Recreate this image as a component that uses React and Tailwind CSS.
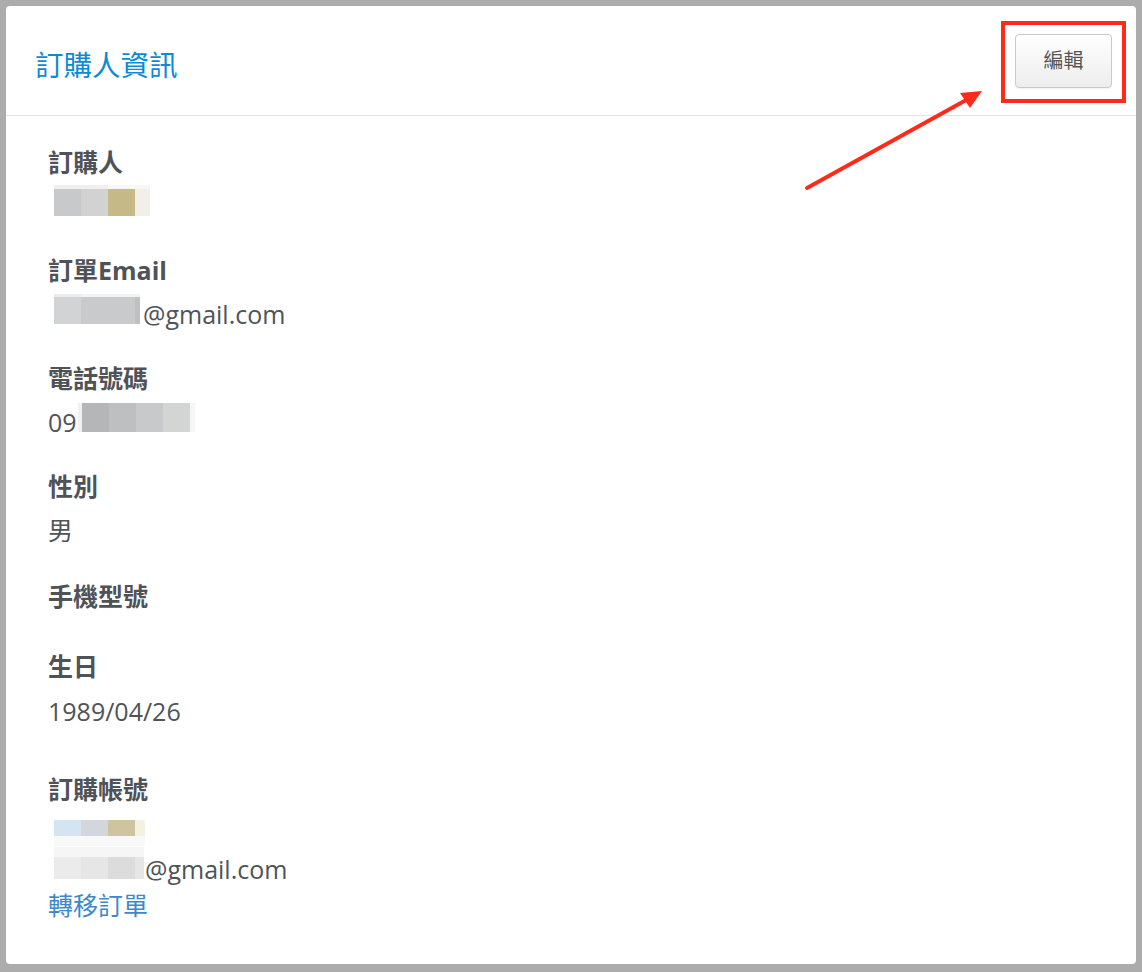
import React from "react";

// 模糊處理過的個資區塊：上方一條淡色，下方一排色塊，底邊對齊文字基線
function Masked({ top, rows, topH, rowH, className = "" }) {
  return (
    <span className={`inline-block overflow-hidden align-baseline -mt-[10px] ${className}`}>
      {top && (
        <span className="flex" style={{ height: topH }}>
          {top.map(([w, c], i) => (
            <span key={i} style={{ width: w, background: c }} />
          ))}
        </span>
      )}
      <span className="flex" style={{ height: rowH }}>
        {rows.map(([w, c], i) => (
          <span key={i} style={{ width: w, background: c }} />
        ))}
      </span>
    </span>
  );
}

function Field({ label, children, className = "" }) {
  return (
    <div className={className}>
      <div className="text-[25px] leading-[36px] font-bold text-[#4f5257]">{label}</div>
      {children}
    </div>
  );
}

function Value({ children, className = "" }) {
  return (
    <div className={`mt-[8px] text-[25px] leading-[36px] text-[#505358] ${className}`}>
      {children}
    </div>
  );
}

export default function App() {
  return (
    <div className="relative w-[1142px] h-[972px] bg-[#acacac] pt-[6px] pl-[6px] pr-[6px] pb-[8px] font-['Open_Sans','Noto_Sans_CJK_TC',sans-serif]">
      <div className="h-full bg-white rounded-[4px] flex flex-col">
        {/* 標題列 */}
        <div className="h-[110px] shrink-0 border-b border-[#e3e3e3] flex items-center justify-between pl-[29px] pr-[24px]">
          <h2 className="mt-[9px] text-[28.5px] leading-[36px] text-[#0c8ad8]">訂購人資訊</h2>
          <button className="w-[97px] h-[54px] rounded-[4px] border border-[#c9c9c9] bg-gradient-to-b from-white to-[#ededed] text-[20px] text-[#555] shadow-[0_1px_1px_rgba(0,0,0,0.05)]">
            編輯
          </button>
        </div>

        {/* 內容 */}
        <div className="pl-[42px] pt-[28px] flex flex-col">
          <Field label="訂購人">
            <Value>
              <Masked
                className="ml-[6px]"
                topH={4}
                rowH={27}
                top={[[54, "#efefef"], [42, "#f7f7f7"]]}
                rows={[[27, "#c8c9cb"], [27, "#d2d2d3"], [27, "#c5b987"], [15, "#f1efe8"]]}
              />
            </Value>
          </Field>

          <Field label="訂單Email" className="mt-[28px]">
            <Value>
              <Masked
                className="ml-[6px]"
                topH={3}
                rowH={27}
                top={[[27, "#ececec"], [59, "#f3f3f3"]]}
                rows={[[27, "#d2d3d5"], [54, "#c9cacc"], [5, "#bfc0c2"]]}
              />
              <span className="ml-[3px]">@gmail.com</span>
            </Value>
          </Field>

          <Field label="電話號碼" className="mt-[28px]">
            <Value className="mt-[6px]">
              09
              <Masked
                className="ml-[1px]"
                rowH={29}
                rows={[
                  [4, "#f1f1f1"],
                  [27, "#b5b6b8"],
                  [27, "#bebfc1"],
                  [27, "#c8c9ca"],
                  [27, "#d3d4d4"],
                  [5, "#f6f6f6"],
                ]}
              />
            </Value>
          </Field>

          <Field label="性別" className="mt-[28px]">
            <Value className="mt-[5px]">男</Value>
          </Field>

          <Field label="手機型號" className="mt-[30px]" />

          <Field label="生日" className="mt-[34px]">
            <Value className="mt-[9px]">1989/04/26</Value>
          </Field>

          <Field label="訂購帳號" className="mt-[42px]">
            <div className="mt-[13px] ml-[6px] flex flex-col w-[91px]">
              <div className="flex h-[16px]">
                <span className="w-[27px] bg-[#d4e4f2]" />
                <span className="w-[27px] bg-[#d3d6da]" />
                <span className="w-[27px] bg-[#cec59f]" />
                <span className="w-[10px] bg-[#f4f0e2]" />
              </div>
              <div className="h-[10px] bg-[#f8f8f8]" />
            </div>
            <div className="mt-[5px] text-[25px] leading-[36px] text-[#505358]">
              <Masked
                className="ml-[6px] align-[-5px]"
                topH={10}
                rowH={22}
                top={[[90, "#f6f6f6"]]}
                rows={[[27, "#ebebeb"], [27, "#e6e6e6"], [27, "#dcdcdc"], [9, "#e6e6e6"]]}
              />
              <span className="ml-[1px]">@gmail.com</span>
            </div>
            <a href="#" className="block text-[25px] leading-[36px] text-[#3d88c9]">
              轉移訂單
            </a>
          </Field>
        </div>
      </div>

      {/* 標示框與箭頭 */}
      <div className="absolute left-[1001px] top-[21px] w-[125px] h-[82px] border-4 border-[#ff2a1a]" />
      <svg className="absolute left-0 top-0 pointer-events-none" width="1142" height="972">
        <line x1="807" y1="188" x2="968" y2="99" stroke="#ff2a1a" strokeWidth="4" strokeLinecap="round" />
        <polygon points="982,91 960,93 970,108" fill="#ff2a1a" />
      </svg>
    </div>
  );
}
